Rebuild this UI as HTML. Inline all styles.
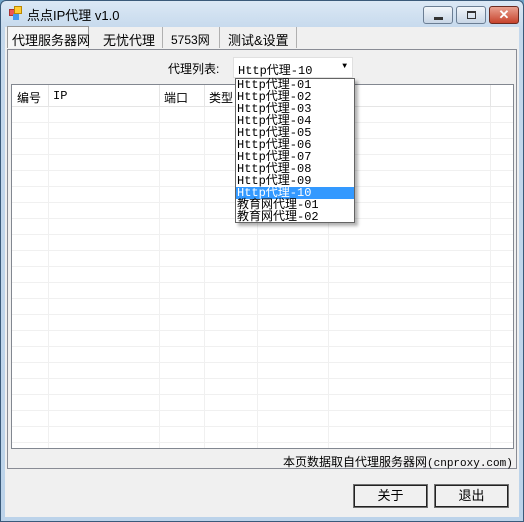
<!DOCTYPE html>
<html><head><meta charset="utf-8"><style>
*{margin:0;padding:0;box-sizing:border-box}
body{width:524px;height:522px;overflow:hidden;background:#6fa3c8;font-family:"Liberation Sans","Noto Sans CJK SC","WenQuanYi Zen Hei",sans-serif;font-size:12px;color:#000;position:relative}
.win{position:absolute;left:0;top:0;width:524px;height:522px;border:1px solid #3a5a7a;border-radius:6px 6px 0 0;background:linear-gradient(#dbe8f5,#c4d8ec 30px,#bcd3ea);}
.client{position:absolute;left:5px;top:27px;width:514px;height:490px;background:#f0f0f0}
.a{position:absolute}
.tab{position:absolute;top:0px;height:21px;border-right:1px solid #b0b0b0;background:#f0f0f0;padding:3px 8px;font-size:13px;white-space:nowrap}
.grid{position:absolute;width:503px;height:365px;border:1px solid #828790;background:#fff;
background-image:repeating-linear-gradient(#fff 0 15px,#f0f0f0 15px 16px);background-position:0 22px;overflow:hidden}
.hd{position:absolute;left:0;top:0;width:100%;height:22px;background:#fff;border-bottom:1px solid #e5e5e5}
.vl{position:absolute;top:0;width:1px;height:100%;background:#f0f0f0}
.hv{position:absolute;top:0;width:1px;height:22px;background:#e5e5e5}
.btn{position:absolute;top:457px;width:75px;height:24px;border:1px solid #707070;background:#f0f0f0;box-shadow:inset 0 0 0 1px #222;text-align:center;line-height:22px;font-size:13px}
.dd{position:absolute;left:230px;top:51px;width:120px;height:145px;background:#fff;border:1px solid #646464;box-shadow:3px 3px 3px rgba(0,0,0,.3);font-family:"Liberation Mono","Noto Sans CJK SC",monospace;font-size:12px;line-height:12px}
.dd div{height:12px;padding-left:1px;white-space:nowrap}
</style></head><body>
<div class="win">
<div class="a" style="left:8px;top:8px;width:7px;height:7px;background:#e55;border:1px solid #a33"></div>
<div class="a" style="left:13px;top:5px;width:8px;height:8px;background:#fc3;border:1px solid #b80"></div>
<div class="a" style="left:12px;top:13px;width:6px;height:6px;background:#49e"></div>
<div class="a" style="left:26px;top:4px;font-size:13px">点点IP代理 v1.0</div>
<div class="a" style="left:422px;top:5px;width:30px;height:18px;border:1px solid #6b7e94;border-radius:3px;background:linear-gradient(#f2f6fa,#c8d6e6)"><div class="a" style="left:10px;top:10px;width:9px;height:3px;background:#333"></div></div>
<div class="a" style="left:455px;top:5px;width:30px;height:18px;border:1px solid #6b7e94;border-radius:3px;background:linear-gradient(#f2f6fa,#c8d6e6)"><div class="a" style="left:10px;top:4px;width:9px;height:8px;border:1px solid #333;border-top-width:2px"></div></div>
<div class="a" style="left:488px;top:5px;width:30px;height:18px;border:1px solid #6b2a20;border-radius:3px;background:linear-gradient(#e9a18f,#c7432d);color:#fff;font-weight:bold;text-align:center;line-height:16px;font-size:13px">✕</div>
</div>
<div class="client">
<div class="tab" style="left:90px;width:68px">无忧代理</div>
<div class="tab" style="left:158px;width:57px;font-size:12px;padding-top:4px">5753网</div>
<div class="tab" style="left:215px;width:77px">测试&amp;设置</div>
<div class="a" style="left:2px;top:22px;width:510px;height:420px;border:1px solid #898c95;background:#f0f0f0">
<div class="a" style="left:160px;top:10px;font-size:12px">代理列表:</div>
<div class="a" style="left:225px;top:7px;width:120px;height:21px;background:#fff;border:1px solid #e0e0e0;font-family:'Liberation Mono','Noto Sans CJK SC',monospace;padding:3px 4px">Http代理-10<span style="position:absolute;right:5px;top:4px;font-size:8px">▼</span></div>
<div class="grid" style="left:3px;top:34px">
<div class="hd"></div>
<div class="vl" style="left:36px"></div><div class="vl" style="left:147px"></div><div class="vl" style="left:192px"></div><div class="vl" style="left:245px"></div><div class="vl" style="left:316px"></div><div class="vl" style="left:478px"></div>
<div class="hv" style="left:36px"></div><div class="hv" style="left:147px"></div><div class="hv" style="left:192px"></div><div class="hv" style="left:478px"></div>
<div class="a" style="left:5px;top:4px">编号</div>
<div class="a" style="left:41px;top:4px;font-family:'Liberation Mono',monospace">IP</div>
<div class="a" style="left:152px;top:4px">端口</div>
<div class="a" style="left:197px;top:4px">类型</div>
</div>
<div class="a" style="left:275px;top:403px;font-size:12px;white-space:nowrap">本页数据取自代理服务器网<span style="font-family:'Liberation Mono',monospace;font-size:11px">(cnproxy.com)</span></div>
</div>
<div class="tab" style="left:2px;top:-1px;height:22px;width:82px;border:1px solid #999;border-bottom:none;background:#f6f6f6;padding:3px 4px">代理服务器网</div>
<div class="btn" style="left:348px">关于</div>
<div class="btn" style="left:429px">退出</div>
<div class="dd">
<div>Http代理-01</div><div>Http代理-02</div><div>Http代理-03</div><div>Http代理-04</div><div>Http代理-05</div><div>Http代理-06</div><div>Http代理-07</div><div>Http代理-08</div><div>Http代理-09</div>
<div style="background:#3399ff;color:#fff">Http代理-10</div>
<div>教育网代理-01</div><div>教育网代理-02</div>
</div>
</div>
</body></html>
